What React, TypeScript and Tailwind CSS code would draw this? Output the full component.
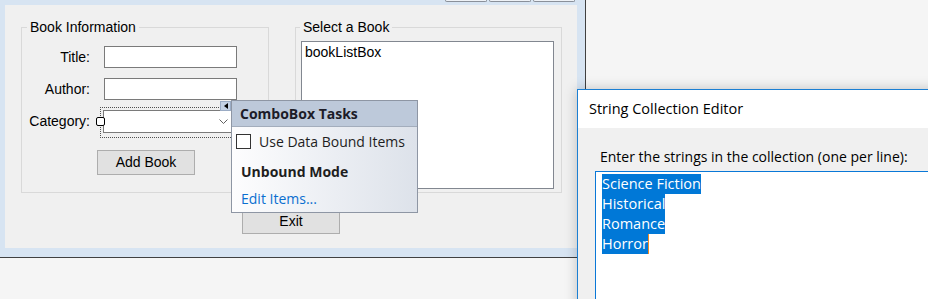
import React from "react";

const ms = "font-['Liberation_Sans',Arial,sans-serif]";
const ui = "font-['Open_Sans','Noto_Sans',sans-serif]";

function TextBox() {
  return <div className="w-[133px] h-[22px] border border-[#7a7a7a] bg-white" />;
}

export default function App() {
  return (
    <div className="relative w-[928px] h-[299px] overflow-hidden bg-[#f5f5f5]">
      {/* designer surface */}
      <div className="w-[586px] h-[258px] bg-[#d7e4f2] border-r border-b border-[#404040] flex flex-col">
        <div className="h-[5px] flex justify-end items-start gap-[2px] pr-[10px]">
          <div className="w-[42px] h-[2px] border-x border-b border-[#8a909a] rounded-b-[2px] bg-[#eef2f7]" />
          <div className="w-[42px] h-[2px] border-x border-b border-[#8a909a] rounded-b-[2px] bg-[#eef2f7]" />
          <div className="w-[42px] h-[2px] border-x border-b border-[#8a909a] rounded-b-[2px] bg-[#eef2f7]" />
        </div>
        <div className={`ml-[5px] w-[572px] h-[243px] bg-[#f0f0f0] pl-[16px] pt-[22px] flex flex-col ${ms} text-[14px] text-black`}>
          <div className="flex gap-[26px]">
            {/* Book Information */}
            <div className="relative w-[248px] h-[166px] border border-[#d9d9d9]">
              <span className="absolute -top-[9px] left-[5px] px-[3px] bg-[#f0f0f0] leading-[16px]">Book Information</span>
              <div className="pt-[18px] flex flex-col">
                <div className="flex items-center h-[22px]">
                  <span className="w-[68px] text-right">Title:</span>
                  <div className="ml-[14px]"><TextBox /></div>
                </div>
                <div className="flex items-center h-[22px] mt-[10px]">
                  <span className="w-[68px] text-right">Author:</span>
                  <div className="ml-[14px]"><TextBox /></div>
                </div>
                <div className="flex items-center h-[23px] mt-[10px]">
                  <span className="w-[68px] text-right">Category:</span>
                  <div className="relative ml-[13px] w-[133px] h-[23px] border border-[#7a7a7a] bg-white flex items-center justify-end pr-[6px]">
                    <svg width="9" height="6" viewBox="0 0 9 6" className="mr-[1px]">
                      <path d="M0.5 0.5 L4.5 4.5 L8.5 0.5" fill="none" stroke="#606060" strokeWidth="1" />
                    </svg>
                    <div className="absolute -left-[4px] -top-[4px] w-[145px] h-[31px] border border-dotted border-[#505050]" />
                    <div className="absolute -left-[8px] top-[6px] w-[9px] h-[9px] border border-black bg-white rounded-[2px]" />
                    <div className="absolute left-[116px] -top-[10px] w-[11px] h-[10px] bg-[#c3d1e4] border border-[#9aabc4] flex items-center justify-center">
                      <svg width="4" height="6" viewBox="0 0 4 6"><path d="M4 0 L0 3 L4 6 Z" fill="#000" /></svg>
                    </div>
                  </div>
                </div>
                <div className="mt-[17px] ml-[75px] w-[98px] h-[25px] bg-[#e1e1e1] border border-[#adadad] flex items-center justify-center">Add Book</div>
              </div>
            </div>
            {/* Select a Book */}
            <div className="relative w-[267px] h-[166px] border border-[#d9d9d9]">
              <span className="absolute -top-[9px] left-[4px] px-[3px] bg-[#f0f0f0] leading-[16px]">Select a Book</span>
              <div className="ml-[5px] mt-[13px] w-[253px] h-[148px] border border-[#828790] bg-white pl-[3px] pt-[2px] leading-[16px]">bookListBox</div>
            </div>
          </div>
          <div className="ml-[221px] mt-[16px] w-[98px] h-[25px] bg-[#e1e1e1] border border-[#adadad] flex items-center justify-center">Exit</div>
        </div>
      </div>

      {/* ComboBox smart tag panel */}
      <div className={`absolute left-[231px] top-[100px] w-[187px] h-[113px] border border-[#8e96a4] flex flex-col ${ui} text-[14px] text-[#1e1e1e] bg-gradient-to-r from-[#fdfdfe] to-[#dde2ea]`}>
        <div className="h-[26px] bg-[#bdc9da] border-b border-[#a3adbc] flex items-center pl-[8px] font-bold text-[#1c1c28]">ComboBox Tasks</div>
        <div className="pl-[4px] pt-[7px] flex flex-col">
          <div className="flex items-center h-[15px]">
            <div className="w-[15px] h-[15px] border border-[#333] bg-white" />
            <span className="ml-[8px]">Use Data Bound Items</span>
          </div>
          <div className="pl-[5px] mt-[13px] leading-[20px] font-bold">Unbound Mode</div>
          <div className="pl-[5px] mt-[7px] leading-[20px] text-[#0b6fd0]">Edit Items...</div>
        </div>
      </div>

      {/* String Collection Editor dialog */}
      <div className={`absolute left-[577px] top-[89px] w-[380px] h-[240px] border border-[#1b7fd3] bg-[#f0f0f0] shadow-[0_0_12px_rgba(0,0,0,0.22)] flex flex-col ${ui} text-[14.5px] text-black`}>
        <div className="h-[38px] bg-white flex items-center pl-[11px]">String Collection Editor</div>
        <div className="pl-[22px] pt-[19px] leading-[20px] text-[14px] whitespace-nowrap">Enter the strings in the collection (one per line):</div>
        <div className="ml-[17px] mt-[4px] flex-1 border border-[#0a78d7] bg-white pl-[6px] pt-[2px] flex flex-col items-start leading-[20px]">
          <span className="bg-[#0078d7] text-white">Science Fiction</span>
          <span className="bg-[#0078d7] text-white">Historical</span>
          <span className="bg-[#0078d7] text-white">Romance</span>
          <span className="flex items-center">
            <span className="bg-[#0078d7] text-white">Horror</span>
            <span className="w-[1px] h-[20px] bg-[#f08a24]" />
          </span>
        </div>
      </div>
    </div>
  );
}
